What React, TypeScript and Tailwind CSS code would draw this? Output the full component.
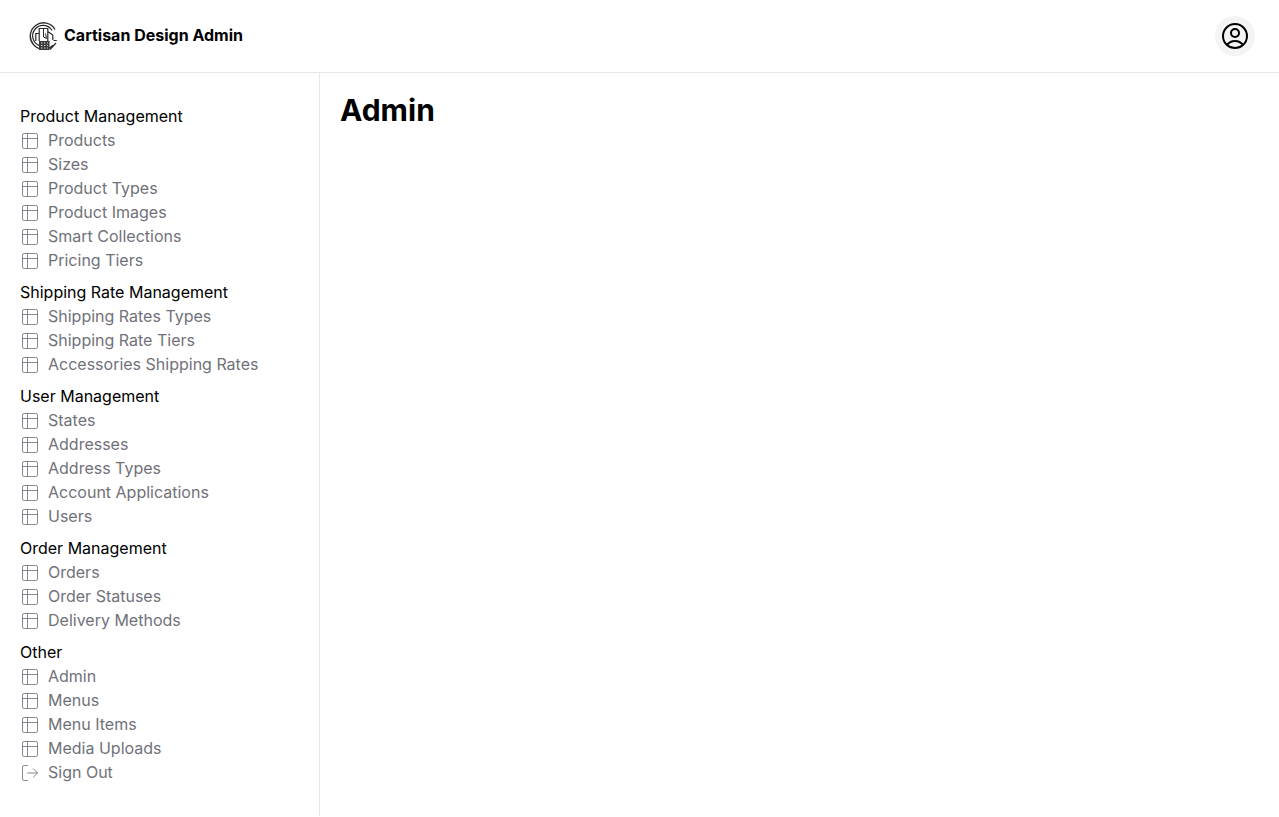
import { LogOut, Table2 } from "lucide-react";
import { HiOutlineUserCircle } from "react-icons/hi2";

const GROUPS = [
  {
    title: "Product Management",
    items: ["Products", "Sizes", "Product Types", "Product Images", "Smart Collections", "Pricing Tiers"],
  },
  {
    title: "Shipping Rate Management",
    items: ["Shipping Rates Types", "Shipping Rate Tiers", "Accessories Shipping Rates"],
  },
  {
    title: "User Management",
    items: ["States", "Addresses", "Address Types", "Account Applications", "Users"],
  },
  {
    title: "Order Management",
    items: ["Orders", "Order Statuses", "Delivery Methods"],
  },
  {
    title: "Other",
    items: ["Admin", "Menus", "Menu Items", "Media Uploads"],
  },
];

function Logo() {
  return (
    <svg width="30" height="30" viewBox="0 0 30 30" fill="none" stroke="#2a2a2a" className="shrink-0">
      {/* outer rings, open on the right */}
      <path d="M26 8.5A13.2 13.2 0 1 0 24 24.2" strokeWidth="1.4" />
      <path d="M23 9.5A10.4 10.4 0 1 0 10 24.4" strokeWidth="1.2" />
      {/* buildings */}
      <path d="M6.8 20v-7.5h3.4M10.2 20V7.5h8.6V20M18.8 10.5l5 3.5v5" strokeWidth="1.2" />
      <path d="M14.5 8v8l3 1.5-1-5" strokeWidth="1" />
      {/* block in front */}
      <rect x="10" y="20" width="10.5" height="9" fill="#3a3a3a" stroke="none" />
      <path d="M12 22h1.4M15 22h1.4M18 22h1M12 24.5h1.4M15 24.5h1.4M18 24.5h1M12 27h1.4M15 27h1.4M18 27h1" stroke="#e0e0e0" strokeWidth="1.2" />
      <path d="M24.5 19.5h3.3M21 28.5l6-6.5" strokeWidth="1.2" />
    </svg>
  );
}

export default function App() {
  return (
    <div className="flex h-[816px] flex-col overflow-hidden bg-white font-['Inter',sans-serif] text-black">
      <header className="flex h-[73px] shrink-0 items-center justify-between border-b border-[#e5e7eb] pl-[29px] pr-6">
        <div className="flex items-center gap-[5px]">
          <Logo />
          <span className="pb-0.5 text-base font-bold">Cartisan Design Admin</span>
        </div>
        <button className="flex h-10 w-10 items-center justify-center rounded-full bg-[#f4f4f5]">
          <HiOutlineUserCircle className="h-8 w-8" />
        </button>
      </header>

      <div className="flex min-h-0 flex-1">
        <aside className="flex w-80 shrink-0 flex-col gap-2 border-r border-[#e5e7eb] px-5 pt-[31px]">
          {GROUPS.map((group, i) => (
            <nav key={group.title} className="flex flex-col">
              <h2 className="text-base font-normal leading-6">{group.title}</h2>
              {group.items.map((item) => (
                <a key={item} className="flex h-6 items-center gap-2 text-base text-[#71717a]">
                  <Table2 className="mt-0.5 h-5 w-5 shrink-0" strokeWidth={1} />
                  {item}
                </a>
              ))}
              {i === GROUPS.length - 1 && (
                <a className="flex h-6 items-center gap-2 text-base text-[#71717a]">
                  <LogOut className="mt-0.5 h-5 w-5 shrink-0" strokeWidth={1} />
                  Sign Out
                </a>
              )}
            </nav>
          ))}
        </aside>

        <main className="flex-1 px-5 pt-[19px]">
          <h1 className="text-3xl font-bold">Admin</h1>
        </main>
      </div>
    </div>
  );
}
